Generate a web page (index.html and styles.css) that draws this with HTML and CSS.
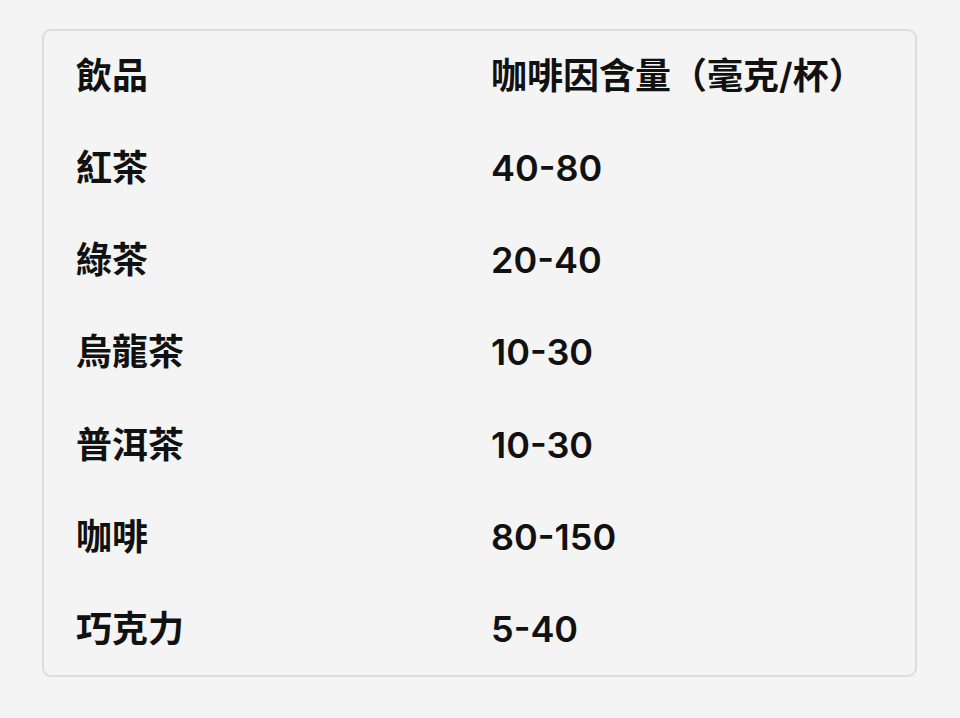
FILE: index.html
```html
<!DOCTYPE html>
<html lang="zh-Hant">
<head>
<meta charset="utf-8">
<link rel="stylesheet" href="styles.css">
</head>
<body>
<div class="card">
  <div class="row"><div class="c1">飲品</div><div class="c2">咖啡因含量（毫克/杯）</div></div>
  <div class="row"><div class="c1">紅茶</div><div class="c2 num">40-80</div></div>
  <div class="row"><div class="c1">綠茶</div><div class="c2 num">20-40</div></div>
  <div class="row"><div class="c1">烏龍茶</div><div class="c2 num">10-30</div></div>
  <div class="row"><div class="c1">普洱茶</div><div class="c2 num">10-30</div></div>
  <div class="row"><div class="c1">咖啡</div><div class="c2 num">80-150</div></div>
  <div class="row"><div class="c1">巧克力</div><div class="c2 num">5-40</div></div>
</div>
</body>
</html>
```
FILE: styles.css
```css
html, body {
  margin: 0;
  padding: 0;
  background: #f4f4f4;
}
body {
  padding: 29px 42px 0 42px;
  font-family: Inter, "Noto Sans CJK TC", sans-serif;
  color: #111;
}
.card {
  width: 875px;
  box-sizing: border-box;
  height: 648px;
  border: 2px solid #dcdcdc;
  border-radius: 9px;
  padding: 0 0 0 32px;
  display: flex;
  flex-direction: column;
}
.row {
  height: 92.3px;
  display: grid;
  grid-template-columns: 415px 1fr;
  align-items: center;
  font-size: 36px;
  font-weight: 600;
  line-height: 1;
}
.row:first-child { margin-top: -1px; }
.num { font-weight: 600; }
```
